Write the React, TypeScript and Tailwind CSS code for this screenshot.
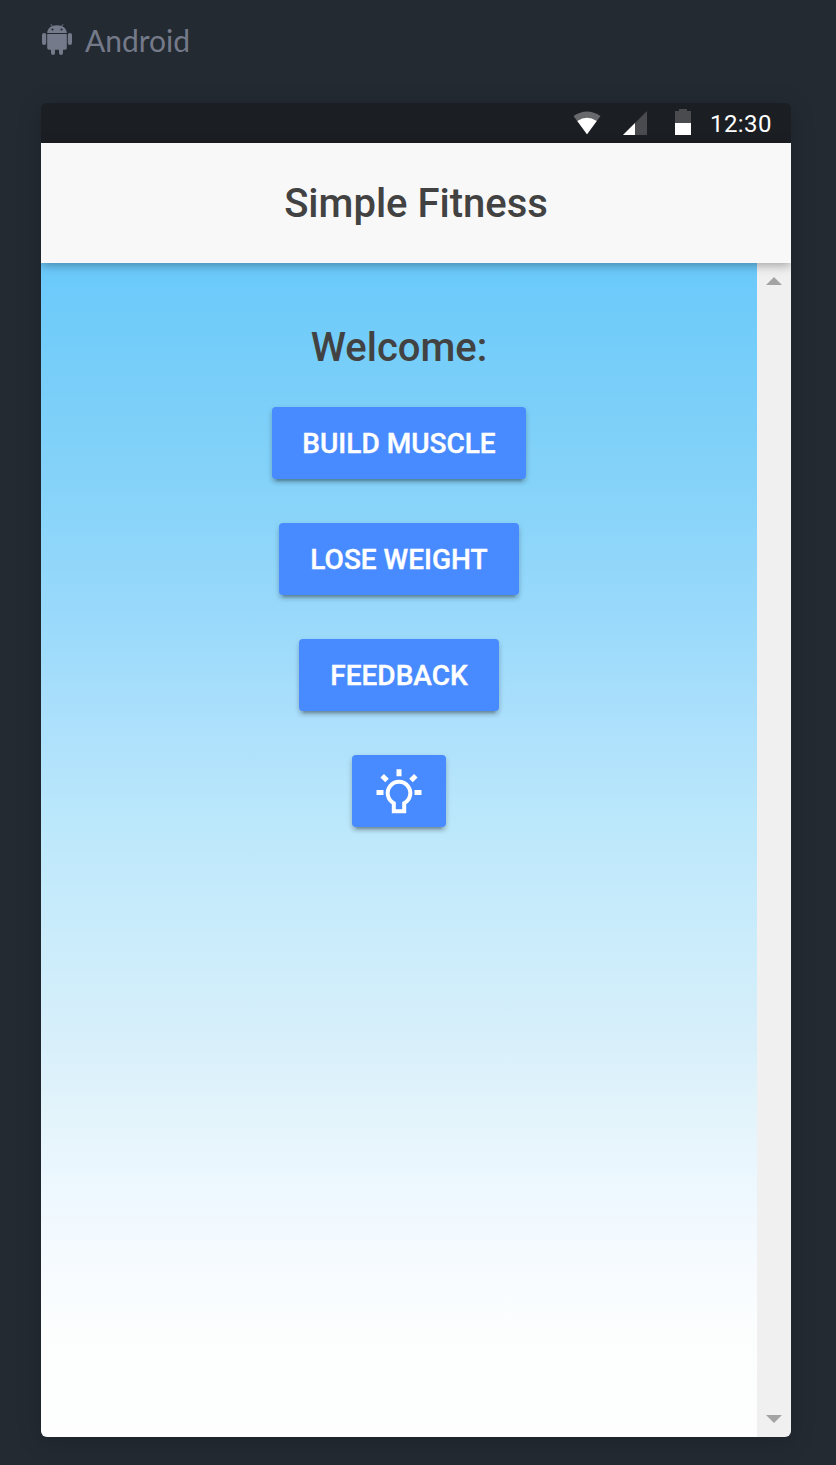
import React from "react";

function AndroidRobot() {
  return (
    <svg width="30" height="32" viewBox="0 0 30 32" fill="#747a89" className="shrink-0">
      <path d="M9 .3 10.8 3.1M21 .3 19.2 3.1" stroke="#747a89" strokeWidth="1" />
      <path
        fillRule="evenodd"
        d="M5.2 9C5.5 4 9.2 1.2 15 1.2S24.5 4 24.8 9ZM10.5 4.4a1.1 1.1 0 1 0 0 2.2 1.1 1.1 0 0 0 0-2.2Zm9 0a1.1 1.1 0 1 0 0 2.2 1.1 1.1 0 0 0 0-2.2Z"
      />
      <path d="M5.2 10h19.6v14a1.8 1.8 0 0 1-1.8 1.8h-2v3.3a1.9 1.9 0 0 1-4 0v-3.3h-4v3.3a1.9 1.9 0 0 1-4 0v-3.3H7A1.8 1.8 0 0 1 5.2 24Z" />
      <rect x="0" y="9" width="4.2" height="12" rx="2.1" />
      <rect x="25.8" y="9" width="4.2" height="12" rx="2.1" />
    </svg>
  );
}

function StatusBar() {
  return (
    <div className="flex h-10 items-start justify-end bg-[#1b1e23] pr-[19px]">
      <svg width="28" height="24" viewBox="0 0 28 24" className="mt-2 mr-[22px]">
        <path d="M.5 5Q14-4.2 27.5 5L14 23.5Z" fill="#67696d" />
        <path d="M4.3 10Q14 3.4 23.7 10L14 23.3Z" fill="#fff" />
      </svg>
      <svg width="24" height="24" viewBox="0 0 24 24" className="mt-2 mr-7">
        <path d="M24 0V24H0Z" fill="#494b4f" />
        <path d="M12 12V24H0Z" fill="#fff" />
      </svg>
      <svg width="16" height="26" viewBox="0 0 16 26" className="mt-1.5 mr-[19px]">
        <path d="M0 2h4V0h8v2h4v12H0Z" fill="#494b4f" />
        <path d="M0 14h16v12H0Z" fill="#fff" />
      </svg>
      <span className="mt-[7px] w-[62px] text-[24px] leading-7 tracking-[0.4px] whitespace-nowrap text-white">
        12:30
      </span>
    </div>
  );
}

function ActionButton({ children, width }: { children: React.ReactNode; width: string }) {
  return (
    <button
      className={`flex h-[72px] items-center justify-center rounded-[4px] bg-[#488aff] pt-0.5 text-[28px] font-medium whitespace-nowrap text-white shadow-[0_4px_4px_0_rgba(0,0,0,0.14),0_6px_2px_-4px_rgba(0,0,0,0.2),0_2px_6px_0_rgba(0,0,0,0.12)] [-webkit-text-stroke:0.4px_white] ${width}`}
    >
      {children}
    </button>
  );
}

function Bulb() {
  return (
    <svg width="46" height="46" viewBox="0 0 46 46" fill="none" stroke="#fff">
      <path d="M17.8 42.3V34.2A11.3 11.3 0 1 1 28.2 34.2V42.3Z" strokeWidth="4" />
      <path d="M23 .3V7.3M.5 23.5H7.5M38.5 23.5h7M6.2 6.7l4.8 4.8M39.8 6.7l-4.8 4.8" strokeWidth="5" />
    </svg>
  );
}

export default function App() {
  return (
    <div className="h-[1465px] w-[836px] overflow-hidden bg-[#242a32] font-['Roboto',sans-serif]">
      <div className="flex h-[103px] items-start gap-[13px] pt-6 pl-[42px] text-[#747a89]">
        <AndroidRobot />
        <span className="font-['Lato',sans-serif] text-[30px] leading-[33px]">Android</span>
      </div>
      <div className="ml-[41px] flex h-[1334px] w-[750px] flex-col overflow-hidden rounded-[6px] shadow-[0_4px_24px_rgba(0,0,0,0.18)]">
        <StatusBar />
        <header className="relative z-10 flex h-[120px] shrink-0 items-center justify-center bg-[#f8f8f8] pt-0.5 text-[40px] font-medium text-[#424242] shadow-[0_2px_10px_rgba(0,0,0,0.35)]">
          Simple Fitness
        </header>
        <div className="flex min-h-0 flex-1">
          <main className="flex flex-1 flex-col items-center bg-[linear-gradient(180deg,#6ac9fb_0%,#74cdf9_7%,#84d2f9_18%,#9bdafb_31%,#aadffc_38%,#bce8fb_48%,#cbecfb_58%,#d7effa_66%,#e4f4fb_73%,#eff8ff_80%,#f7fbff_86%,#fcfefe_91%,#fefefe_100%)] pt-[61px]">
            <h1 className="mb-[35px] text-[40px] leading-[48px] font-medium text-[#424242]">Welcome:</h1>
            <div className="flex flex-col items-center gap-11">
              <ActionButton width="w-[254px]">BUILD MUSCLE</ActionButton>
              <ActionButton width="w-[240px]">LOSE WEIGHT</ActionButton>
              <ActionButton width="w-[200px]">FEEDBACK</ActionButton>
              <ActionButton width="w-[94px]">
                <Bulb />
              </ActionButton>
            </div>
          </main>
          <div className="flex w-[34px] flex-col items-center justify-between bg-[#f0f0f0] pt-3.5 pb-3.5">
            <svg width="16" height="8" viewBox="0 0 16 8">
              <path d="M0 8 8 0l8 8Z" fill="#a3a3a3" />
            </svg>
            <svg width="16" height="8" viewBox="0 0 16 8">
              <path d="m0 0 8 8 8-8Z" fill="#a3a3a3" />
            </svg>
          </div>
        </div>
      </div>
    </div>
  );
}
